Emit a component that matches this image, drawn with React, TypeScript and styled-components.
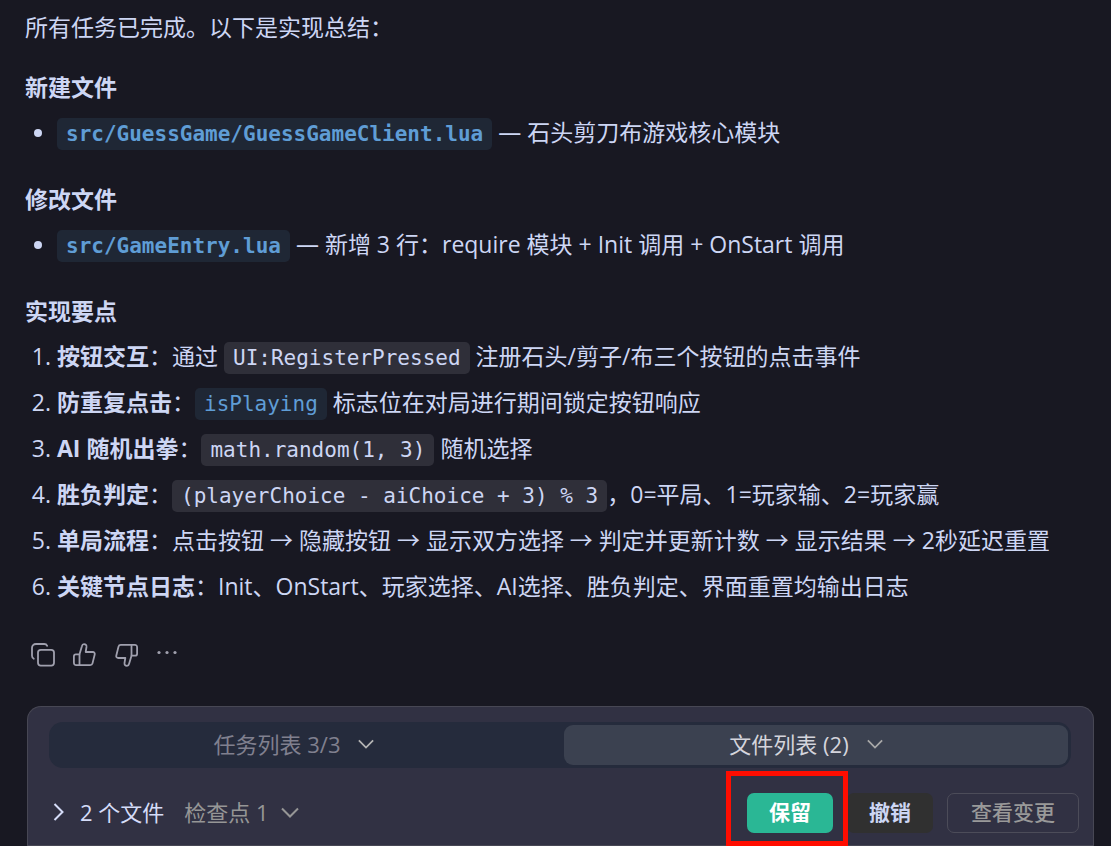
import React from "react";
import styled, { createGlobalStyle } from "styled-components";

const GlobalStyle = createGlobalStyle`
  *, *::before, *::after { box-sizing: border-box; }
  body {
    margin: 0;
    background: #181822;
    color: #cdd6f4;
    font-family: "Open Sans", "Noto Sans CJK SC", sans-serif;
    font-size: 23px;
    line-height: 34px;
  }
  button { font: inherit; color: inherit; border: 0; background: none; padding: 0; cursor: pointer; }
`;

const Page = styled.main`
  display: flex;
  flex-direction: column;
  min-height: 100vh;
  padding: 10px 17px 0 25px;
`;

const Intro = styled.p`
  margin: 0 0 26px;
`;

const Section = styled.section`
  margin-bottom: 33px;
`;

const Heading = styled.h3`
  margin: 0 0 11px;
  font-size: 23px;
  font-weight: 700;
`;

const BulletList = styled.ul`
  margin: 0;
  padding-left: 32px;
`;

const Steps = styled.ol`
  display: grid;
  gap: 12px;
  margin: 0;
  padding-left: 32px;
`;

const Item = styled.li`
  height: 34px;
  white-space: nowrap;
`;

const Code = styled.code<{ $link?: boolean; $bold?: boolean }>`
  display: inline-block;
  padding: 0 9px;
  border-radius: 5px;
  background: ${(p) => (p.$link ? "#1f2735" : "#2f2f39")};
  color: ${(p) => (p.$link ? "#5f9dd5" : "#cdd6f4")};
  font-family: "DejaVu Sans Mono", monospace;
  font-size: 21px;
  font-weight: ${(p) => (p.$bold ? 700 : 400)};
  line-height: 32px;
`;

const Actions = styled.div`
  display: flex;
  gap: 18px;
  margin: 7px 0 39px 6px;
  color: #a0a0ae;
`;

const IconButton = styled.button`
  display: flex;
  width: 24px;
  height: 24px;
`;

const Panel = styled.section`
  margin-left: 2px;
  border: 1px solid #474754;
  border-bottom: 0;
  border-radius: 14px 14px 0 0;
  background: #313143;
  font-size: 22px;
  line-height: 30px;
`;

const Tabs = styled.div`
  display: grid;
  grid-template-columns: 1fr 1fr;
  gap: 8px;
  margin: 15px 22px 0 21px;
  padding: 3px;
  border-radius: 14px;
  background: #252b3c;
`;

const Tab = styled.button<{ $active?: boolean }>`
  display: flex;
  align-items: center;
  justify-content: center;
  gap: 18px;
  height: 40px;
  padding: 0 20px 2px 0;
  border-radius: 9px;
  background: ${(p) => (p.$active ? "#3b4150" : "transparent")};
  color: ${(p) => (p.$active ? "#d4d4dc" : "#80808f")};
`;

const FileBar = styled.div`
  display: flex;
  align-items: center;
  padding: 25px 14px 12px 25px;
  border-bottom: 1px solid #474754;
`;

const FileToggle = styled.button`
  display: flex;
  align-items: center;
  gap: 16px;
  margin-right: 20px;
  padding-bottom: 2px;
  color: #d5dcf8;
`;

const Checkpoint = styled.button`
  display: flex;
  align-items: center;
  gap: 12px;
  padding-bottom: 2px;
  color: #969696;
`;

const ButtonGroup = styled.div`
  display: flex;
  gap: 14px;
  margin-left: auto;
  font-size: 21px;
`;

const ActionButton = styled.button<{ $kind: "keep" | "undo" | "view" }>`
  height: 40px;
  padding: 0 ${(p) => (p.$kind === "view" ? 23 : 22)}px 2px;
  border-radius: 7px;
  border: ${(p) => (p.$kind === "view" ? "1px solid #4c4c59" : "0")};
  background: ${(p) => ({ keep: "#2ab795", undo: "#303030", view: "transparent" })[p.$kind]};
  color: ${(p) => ({ keep: "#ffffff", undo: "#cdd6f4", view: "#999999" })[p.$kind]};
  font-weight: ${(p) => ({ keep: 700, undo: 600, view: 500 })[p.$kind]};
`;

const Highlight = styled.div`
  position: relative;
  &::after {
    content: "";
    position: absolute;
    z-index: 1;
    inset: -22px -15px -13px -21px;
    border: 5px solid #ff0d00;
    pointer-events: none;
  }
`;

const Chevron = ({ size, color, right }: { size: number; color: string; right?: boolean }) => (
  <svg
    width={right ? size / 2 + 2 : size}
    height={right ? size : size / 2 + 2}
    viewBox={right ? "0 0 11 18" : "0 0 18 11"}
    fill="none"
    stroke={color}
    strokeWidth={2}
    aria-hidden
  >
    <path d={right ? "M1.5 1l8 8-8 8" : "M1 1.5l8 8 8-8"} />
  </svg>
);

const CopyIcon = () => (
  <svg width="24" height="24" viewBox="0 0 24 24" fill="none" stroke="currentColor" strokeWidth="1.8" strokeLinecap="round" aria-hidden>
    <rect x="7" y="6.8" width="16" height="15.8" rx="2.8" />
    <path d="M2.8 15.7C1.6 15.1 1 14.1 1 12.8V5c0-2.4 1.6-4 4-4h8.3c1.3 0 2.3.6 2.9 1.8" />
  </svg>
);

const ThumbIcon = ({ down }: { down?: boolean }) => (
  <svg
    width="24"
    height="24"
    viewBox="0 0 24 24"
    fill="none"
    stroke="currentColor"
    strokeWidth="1.8"
    strokeLinejoin="round"
    aria-hidden
  >
    <g transform={down ? "rotate(180 11.5 12)" : undefined}>
      <path d="M6.500 11.300 8.900 3.300C9.200 2 9.800 1.200 11 1.200c1.700 0 2.700 1 2.500 2.700L12.700 9h7c1.500 0 2.400 1.100 2 2.600l-2.200 8.800c-.3 1.200-1.100 1.800-2.300 1.800H3.300C1.700 22.200.9 21.200.9 19.600v-6.300c0-1.300.8-2 2-2Z" />
      <path d="M6.500 11.300v10.900" />
    </g>
  </svg>
);

const MoreIcon = () => (
  <svg width="24" height="24" viewBox="0 0 24 24" fill="currentColor" aria-hidden>
    <circle cx="2" cy="9.500" r="1.600" />
    <circle cx="10" cy="9.500" r="1.600" />
    <circle cx="18" cy="9.500" r="1.600" />
  </svg>
);

export default function App() {
  return (
    <>
      <GlobalStyle />
      <Page lang="zh-CN">
        <Intro>所有任务已完成。以下是实现总结：</Intro>

        <Section>
          <Heading>新建文件</Heading>
          <BulletList>
            <Item>
              <Code $link $bold>src/GuessGame/GuessGameClient.lua</Code> — 石头剪刀布游戏核心模块
            </Item>
          </BulletList>
        </Section>

        <Section>
          <Heading>修改文件</Heading>
          <BulletList>
            <Item>
              <Code $link $bold>src/GameEntry.lua</Code> — 新增 3 行：require 模块 + Init 调用 + OnStart 调用
            </Item>
          </BulletList>
        </Section>

        <Section>
          <Heading>实现要点</Heading>
          <Steps>
            <Item>
              <strong>按钮交互</strong>：通过 <Code>UI:RegisterPressed</Code> 注册石头/剪子/布三个按钮的点击事件
            </Item>
            <Item>
              <strong>防重复点击</strong>：<Code $link>isPlaying</Code> 标志位在对局进行期间锁定按钮响应
            </Item>
            <Item>
              <strong>AI 随机出拳</strong>：<Code>math.random(1, 3)</Code> 随机选择
            </Item>
            <Item>
              <strong>胜负判定</strong>：<Code>(playerChoice - aiChoice + 3) % 3</Code>，0=平局、1=玩家输、2=玩家赢
            </Item>
            <Item>
              <strong>单局流程</strong>：点击按钮 → 隐藏按钮 → 显示双方选择 → 判定并更新计数 → 显示结果 → 2秒延迟重置
            </Item>
            <Item>
              <strong>关键节点日志</strong>：Init、OnStart、玩家选择、AI选择、胜负判定、界面重置均输出日志
            </Item>
          </Steps>
        </Section>

        <Actions>
          <IconButton aria-label="复制"><CopyIcon /></IconButton>
          <IconButton aria-label="赞"><ThumbIcon /></IconButton>
          <IconButton aria-label="踩"><ThumbIcon down /></IconButton>
          <IconButton aria-label="更多"><MoreIcon /></IconButton>
        </Actions>

        <Panel>
          <Tabs>
            <Tab>
              <span>任务列表 3/3</span>
              <Chevron size={16} color="#b4b4b4" />
            </Tab>
            <Tab $active>
              <span>文件列表 (2)</span>
              <Chevron size={16} color="#a8a8a8" />
            </Tab>
          </Tabs>
          <FileBar>
            <FileToggle>
              <Chevron size={18} color="#d5dcf8" right />
              <span>2 个文件</span>
            </FileToggle>
            <Checkpoint>
              <span>检查点 1</span>
              <Chevron size={18} color="#969696" />
            </Checkpoint>
            <ButtonGroup>
              <Highlight>
                <ActionButton $kind="keep">保留</ActionButton>
              </Highlight>
              <ActionButton $kind="undo">撤销</ActionButton>
              <ActionButton $kind="view">查看变更</ActionButton>
            </ButtonGroup>
          </FileBar>
        </Panel>
      </Page>
    </>
  );
}
